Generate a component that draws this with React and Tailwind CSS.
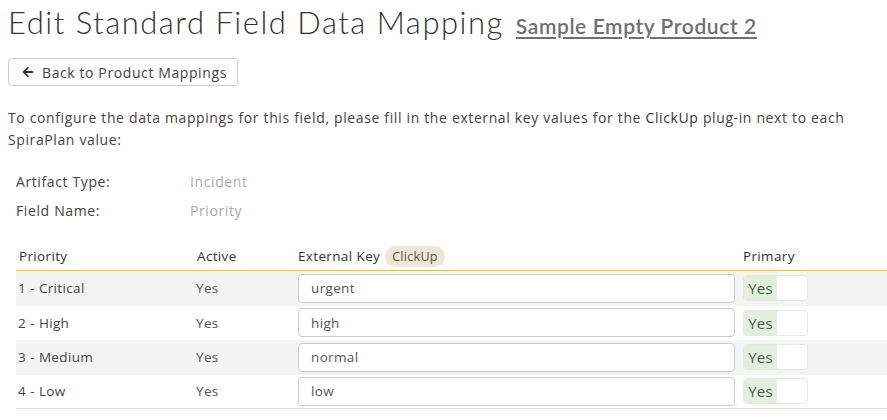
import React from "react";
import { FaArrowLeft } from "react-icons/fa";

const rows = [
  { name: "1 - Critical", key: "urgent" },
  { name: "2 - High", key: "high" },
  { name: "3 - Medium", key: "normal" },
  { name: "4 - Low", key: "low" },
];

export default function App() {
  return (
    <div className="w-[887px] h-[420px] overflow-hidden bg-white px-2 font-['Open_Sans',sans-serif] text-[14px] text-[#444] tracking-[0.6px] [word-spacing:0.2px]">
      <h1 className="flex items-baseline pt-[2px] h-[48px] leading-[40px] [word-spacing:0px]">
        <span className="font-['Lato',sans-serif] font-light text-[31px] text-[#333] tracking-[1.5px]">
          Edit Standard Field Data Mapping
        </span>
        <a className="ml-[12px] font-['Lato',sans-serif] font-semibold text-[21px] text-[#707070] underline underline-offset-[3px] tracking-[0.6px]">
          Sample Empty Product 2
        </a>
      </h1>
      <div className="mt-[10px]">
        <button className="h-[28px] w-[230px] flex items-center gap-[8px] pl-[13px] border border-[#ccc] rounded-[4px] bg-white text-[#444] text-[14px]">
          <FaArrowLeft size={12} color="#333" />
          <span>Back to Product Mappings</span>
        </button>
      </div>
      <p className="mt-[21px] leading-[22px] text-[#444]">
        To configure the data mappings for this field, please fill in the external key values for the{" "}
        <span className="font-medium text-[#333]">ClickUp</span> plug-in next to each SpiraPlan value:
      </p>
      <div className="mt-[16px] pl-[8px]">
        <div className="grid grid-cols-[174px_1fr] h-[29px] items-center">
          <span>Artifact Type:</span>
          <span className="text-[#aaa]">Incident</span>
        </div>
        <div className="grid grid-cols-[174px_1fr] h-[29px] items-center">
          <span>Field Name:</span>
          <span className="text-[#aaa]">Priority</span>
        </div>
      </div>
      <div className="mt-[18px] ml-[8px] mr-[-8px] text-[13.5px] tracking-[0.35px]">
        <div className="grid grid-cols-[179px_101px_445px_1fr] h-[28px] items-center border-b border-[#f5c211] text-[#333]">
          <span className="pl-[3px]">Priority</span>
          <span className="pl-[2px]">Active</span>
          <span className="flex items-center gap-[5px] pl-[2px]">
            External Key
            <span className="h-[21px] px-[7px] rounded-full bg-[#efe7d3] text-[#555] text-[12.5px] leading-[21px] tracking-[0.3px]">
              ClickUp
            </span>
          </span>
          <span className="pl-[2px]">Primary</span>
        </div>
        {rows.map((r, i) => (
          <div
            key={r.name}
            className={
              "grid grid-cols-[179px_101px_445px_1fr] h-[34.5px] items-center " +
              (i % 2 === 0 ? "bg-[#f4f4f4]" : "bg-white") +
              (i === rows.length - 1 ? " border-b border-[#ddd]" : "")
            }
          >
            <span className="pl-[2px] text-[#444]">{r.name}</span>
            <span className="pl-[1px] text-[#555]">Yes</span>
            <span className="pl-[2px]">
              <div className="h-[29px] w-[437px] border border-[#ccc] rounded-[4px] bg-white pl-[12px] flex items-center text-[#555]">
                {r.key}
              </div>
            </span>
            <span className="pl-[2px]">
              <div className="h-[26px] w-[65px] flex border border-[#e6e6e6] rounded-[4px] overflow-hidden bg-white">
                <span className="w-[33px] bg-[#e0f0dc] text-[#555] text-[15px] tracking-[0.2px] flex items-center justify-center">
                  Yes
                </span>
              </div>
            </span>
          </div>
        ))}
      </div>
    </div>
  );
}
